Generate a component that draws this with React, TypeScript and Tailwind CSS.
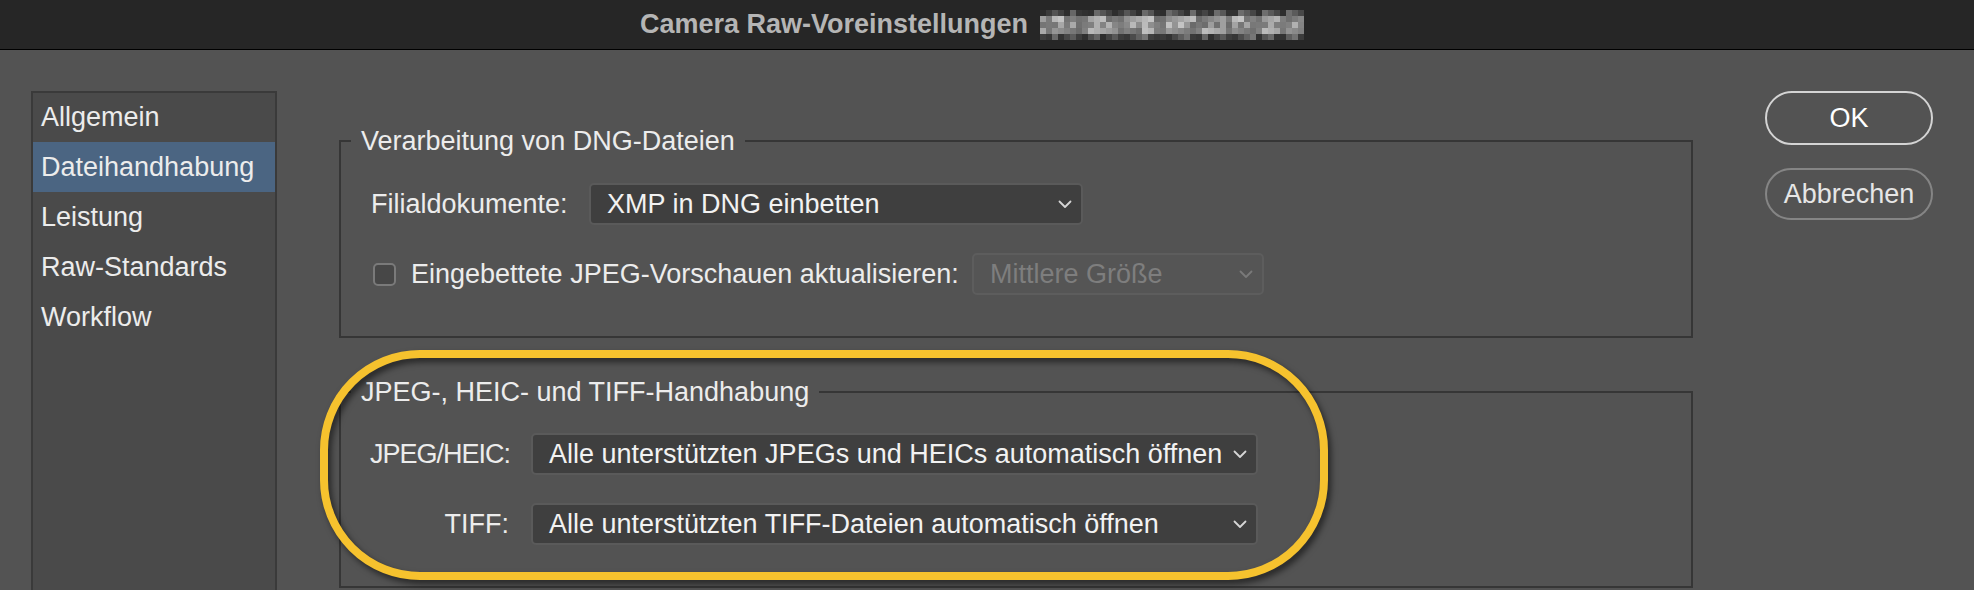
import clsx from "clsx";

const Chevron = ({ dim }: { dim?: boolean }) => (
  <svg
    width="14"
    height="9"
    viewBox="0 0 14 9"
    className={dim ? "text-[#7a7a7a]" : "text-[#d6d6d6]"}
  >
    <path
      d="M1.5 1.5 L7 7 L12.5 1.5"
      fill="none"
      stroke="currentColor"
      strokeWidth="1.8"
      strokeLinecap="round"
      strokeLinejoin="round"
    />
  </svg>
);

const Select = ({
  text,
  className,
  disabled,
}: {
  text: string;
  className: string;
  disabled?: boolean;
}) => (
  <div
    className={clsx(
      "flex h-[42px] shrink-0 items-center justify-between rounded-[5px] border-2 pl-[16px] pr-[9px]",
      disabled
        ? "border-[#5d5d5d] bg-[#555555] text-[#7e7e7e]"
        : "border-[#5a5a5a] bg-[#3f3f3f] text-[#f2f2f2]",
      className
    )}
  >
    <span className="whitespace-nowrap">{text}</span>
    <Chevron dim={disabled} />
  </div>
);

// blurred version number in the title, drawn as a mosaic
const COLS = 44;
const ROWS = 5;
const gaps = [1, 6, 7, 13, 19, 20, 26, 31, 36, 40];
const tiles = Array.from({ length: COLS * ROWS }, (_, i) => {
  const c = i % COLS;
  const r = Math.floor(i / COLS);
  let v = ((c * 73 + r * 151 + c * r * 37) % 97) / 97;
  if (gaps.includes(c)) v *= 0.25;
  if (r === 0 || r === 4) v *= 0.5;
  else v = 0.4 + v * 0.6;
  const g = Math.round(44 + v * 155);
  return { c, r, fill: `rgb(${g},${g},${g})` };
});

const Mosaic = () => (
  <svg width="264" height="30" viewBox="0 0 264 30" className="ml-[12px]">
    {tiles.map((t) => (
      <rect key={`${t.c}-${t.r}`} x={t.c * 6} y={t.r * 6} width="6" height="6" fill={t.fill} />
    ))}
  </svg>
);

const navItems = ["Allgemein", "Dateihandhabung", "Leistung", "Raw-Standards", "Workflow"];

const App = () => {
  return (
    <div className="relative h-[590px] w-[1974px] overflow-hidden bg-[#535353] font-['Liberation_Sans',Arial,sans-serif] text-[27px] text-[#ececec]">
      {/* title bar */}
      <header className="flex h-[50px] items-center justify-center border-b border-black bg-[#262626] pr-[30px]">
        <span className="text-[27px] font-bold text-[#b5b5b5]">Camera Raw-Voreinstellungen</span>
        <Mosaic />
      </header>

      <div className="flex items-start">
        {/* left list */}
        <nav className="ml-[31px] mt-[41px] h-[520px] w-[246px] shrink-0 border-2 border-[#3a3a3a] bg-[#4a4a4a]">
          {navItems.map((item, i) => (
            <div
              key={item}
              className={clsx(
                "flex items-center pl-[8px]",
                i === 0 ? "h-[49px]" : "h-[50px]",
                i === 1 && "bg-[#4b6582]"
              )}
            >
              {item}
            </div>
          ))}
        </nav>

        {/* settings */}
        <main className="ml-[62px] flex w-[1354px] shrink-0 flex-col pt-[76px]">
          <fieldset className="border-2 border-[#363636] pb-[41px]">
            <legend className="ml-[10px] px-[10px] leading-[30px]">Verarbeitung von DNG-Dateien</legend>
            <div className="flex flex-col gap-[28px] pl-[30px] pt-[27px]">
              <div className="flex h-[42px] items-center">
                <span className="w-[218px] shrink-0">Filialdokumente:</span>
                <Select text="XMP in DNG einbetten" className="w-[494px]" />
              </div>
              <div className="flex h-[42px] items-center">
                <div className="ml-[2px] h-[23px] w-[23px] shrink-0 rounded-[5px] border-2 border-[#7a7a7a] bg-[#474747]" />
                <span className="ml-[15px] w-[546px] shrink-0 whitespace-nowrap">
                  Eingebettete JPEG-Vorschauen aktualisieren:
                </span>
                <Select text="Mittlere Größe" className="ml-[15px] w-[292px]" disabled />
              </div>
            </div>
          </fieldset>

          <fieldset className="mt-[39px] border-2 border-[#363636] pb-[41px]">
            <legend className="ml-[10px] px-[10px] leading-[30px]">JPEG-, HEIC- und TIFF-Handhabung</legend>
            <div className="flex flex-col gap-[28px] pl-[29px] pt-[26px]">
              <div className="flex h-[42px] items-center gap-[22px]">
                <span className="w-[139px] shrink-0 whitespace-nowrap text-right tracking-[-1px]">JPEG/HEIC:</span>
                <Select text="Alle unterstützten JPEGs und HEICs automatisch öffnen" className="w-[727px]" />
              </div>
              <div className="flex h-[42px] items-center gap-[22px]">
                <span className="w-[139px] shrink-0 whitespace-nowrap text-right">TIFF:</span>
                <Select text="Alle unterstützten TIFF-Dateien automatisch öffnen" className="w-[727px]" />
              </div>
            </div>
          </fieldset>
        </main>

        {/* buttons */}
        <aside className="ml-[72px] mt-[41px] flex w-[168px] shrink-0 flex-col gap-[23px]">
          <button className="h-[54px] rounded-full border-2 border-[#d4d4d4] text-white">OK</button>
          <button className="h-[52px] rounded-full border-2 border-[#858585] text-[#e6e6e6]">Abbrechen</button>
        </aside>
      </div>

      {/* yellow annotation */}
      <div className="pointer-events-none absolute left-[320px] top-[350px] h-[230px] w-[1008px] rounded-[100px] border-[8px] border-[#f6c22e] drop-shadow-[3px_4px_3px_rgba(0,0,0,0.55)]" />
    </div>
  );
};

export default App;
